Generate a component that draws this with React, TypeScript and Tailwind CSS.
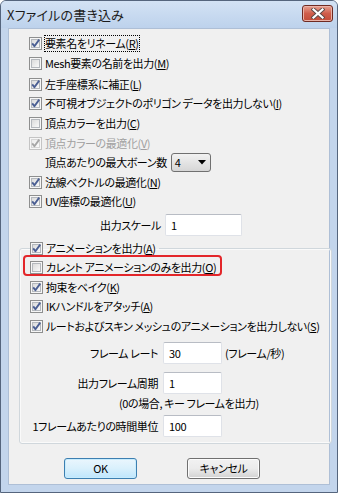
import type { ReactNode } from 'react'

function Box({ checked = false, disabled = false }: { checked?: boolean; disabled?: boolean }) {
  const edge = disabled ? '#c4c4c4' : '#8e8f8f'
  const inner = disabled ? '#d6d6d6' : '#b4b8bd'
  const tick = disabled ? '#a6a6a6' : '#4b5f93'
  return (
    <svg width="13" height="13" viewBox="0 0 13 13" className="shrink-0">
      <defs>
        <linearGradient id={disabled ? 'cbd' : 'cb'} x1="0" y1="0" x2="1" y2="1">
          <stop offset="0" stopColor={disabled ? '#ececec' : '#d9d9d9'} />
          <stop offset="1" stopColor="#fbfbfb" />
        </linearGradient>
      </defs>
      <rect x="0.5" y="0.5" width="12" height="12" fill="#f6f6f6" stroke={edge} />
      <rect x="2.5" y="2.5" width="8" height="8" fill={`url(#${disabled ? 'cbd' : 'cb'})`} stroke={inner} />
      {checked && (
        <path d="M3.2 6.4 L5.4 9.2 L10.2 2.6" fill="none" stroke={tick} strokeWidth="1.9" strokeLinejoin="round" />
      )}
    </svg>
  )
}

function Check({ label, k, checked = false, disabled = false, focus = false, h = 20 }: {
  label: ReactNode; k: string; checked?: boolean; disabled?: boolean; focus?: boolean; h?: number
}) {
  return (
    <div className="flex items-center gap-[2px]" style={{ height: h }}>
      <Box checked={checked} disabled={disabled} />
      <span className={`border leading-[15px] whitespace-nowrap ${focus ? 'border-dotted border-black' : 'border-transparent'} ${disabled ? 'text-[#a0a0a0]' : 'text-black'}`}>
        {label}(<u className="underline-offset-[1px]">{k}</u>)
      </span>
    </div>
  )
}

function Field({ value, w }: { value: string; w: number }) {
  return (
    <div className="h-[22px] bg-white border border-[#dfe2e8] border-t-[#b8bcc4] rounded-[2px] flex items-center pl-[5px] text-black" style={{ width: w }}>
      {value}
    </div>
  )
}

function Button({ children, primary = false }: { children: ReactNode; primary?: boolean }) {
  return (
    <div className={`w-[73px] h-[21px] rounded-[3px] border flex items-center justify-center text-black ${primary ? 'border-[#3c7fb1] bg-linear-to-b from-[#eaf6fd] via-[#d9f0fc] to-[#bee6fd] shadow-[inset_0_0_0_1px_#c8ecfd]' : 'border-[#707070] bg-linear-to-b from-[#f2f2f2] via-[#ebebeb] to-[#d2d2d2] shadow-[inset_0_0_0_1px_#fcfcfc]'}`}>
      {children}
    </div>
  )
}

export default function App() {
  return (
    <div className="w-[338px] h-[493px] bg-[#c3d5ec] border border-[#55657d] rounded-t-[6px] flex flex-col font-['Noto_Sans_CJK_JP',sans-serif] text-[11px] tracking-[-0.4px] [font-feature-settings:'palt'] overflow-hidden">
      {/* title bar */}
      <div className="h-[27px] shrink-0 flex items-start pl-[6px] pr-[4px] bg-linear-to-b from-[#d3e2f4] to-[#bdd2ec]">
        <span className="mt-[5px] text-[13px] leading-[17px] tracking-[0.2px] text-[#1b1b1b]">Xファイルの書き込み</span>
        <div className="ml-auto mt-[4px] w-[31px] h-[17px] rounded-[3px] border border-[#6f2a22] bg-linear-to-b from-[#e6a091] via-[#cf5d4b] to-[#c34c38] flex items-center justify-center shadow-[inset_0_0_0_1px_#eab3a8]">
          <svg width="14" height="11" viewBox="0 0 14 11">
            <path d="M2.5 1.5 L11.5 9.5 M11.5 1.5 L2.5 9.5" stroke="#5a4a48" strokeWidth="4" strokeLinecap="square" />
            <path d="M2.5 1.5 L11.5 9.5 M11.5 1.5 L2.5 9.5" stroke="#ffffff" strokeWidth="2.2" strokeLinecap="square" />
          </svg>
        </div>
      </div>

      {/* client area */}
      <div className="flex-1 mx-[7px] mb-[7px] bg-[#f0f0f0] border border-[#aebfd6] flex flex-col pt-[4px]">
        <div className="pl-[20px] flex flex-col">
          <Check label="要素名をリネーム" k="R" checked focus h={20} />
          <Check label="Mesh要素の名前を出力" k="M" h={21} />
          <Check label="左手座標系に補正" k="L" checked h={20} />
          <Check label="不可視オブジェクトのポリゴン データを出力しない" k="I" checked h={19} />
          <Check label="頂点カラーを出力" k="C" h={20} />
          <Check label="頂点カラーの最適化" k="V" checked disabled h={20} />
          <div className="h-[19px] flex items-center pl-[16px] gap-[4px]">
            <span className="text-black">頂点あたりの最大ボーン数</span>
            <div className="w-[40px] h-[19px] rounded-[3px] border border-[#707070] bg-linear-to-b from-[#f2f2f2] to-[#d6d6d6] flex items-center pl-[3px] pr-[4px] text-black">
              4
              <svg className="ml-auto" width="8" height="5" viewBox="0 0 8 5"><path d="M0 0 H8 L4 4.5 Z" fill="#000" /></svg>
            </div>
          </div>
          <Check label="法線ベクトルの最適化" k="N" checked h={20} />
          <Check label="UV座標の最適化" k="U" checked h={19} />
        </div>

        <div className="mt-[3px] flex items-center">
          <span className="w-[152px] text-right text-black">出力スケール</span>
          <div className="ml-[4px]"><Field value="1" w={77} /></div>
        </div>

        <fieldset className="mt-[2px] ml-[10px] w-[302px] border border-[#d0d7dc] rounded-[3px] px-[10px] pb-[6px] m-0 shadow-[inset_0_0_0_1px_#fafafa]">
          <legend className="pr-[2px] h-[20px]">
            <Check label="アニメーションを出力" k="A" checked h={20} />
          </legend>
          <div className="relative">
            <span className="absolute left-[-7px] top-[-3px] w-[199px] h-[21px] rounded-[4px] border-[2.5px] border-[#e3262a]" />
            <Check label="カレント アニメーションのみを出力" k="O" h={19} />
          </div>
          <Check label="拘束をベイク" k="K" checked h={20} />
          <Check label="IKハンドルをアタッチ" k="A" checked h={19} />
          <Check label="ルートおよびスキン メッシュのアニメーションを出力しない" k="S" checked h={20} />

          <div className="mt-[6px] flex items-center">
            <span className="w-[128px] text-right text-black">フレーム レート</span>
            <div className="ml-[5px]"><Field value="30" w={59} /></div>
            <span className="ml-[3px] text-black">(フレーム/秒)</span>
          </div>
          <div className="mt-[8px] flex items-center">
            <span className="w-[128px] text-right text-black">出力フレーム周期</span>
            <div className="ml-[5px]"><Field value="1" w={59} /></div>
          </div>
          <div className="h-[19px] flex items-center pl-[89px] text-black">(0の場合, キー フレームを出力)</div>
          <div className="mt-[2px] flex items-center">
            <span className="w-[128px] text-right text-black whitespace-nowrap">1フレームあたりの時間単位</span>
            <div className="ml-[5px]"><Field value="100" w={59} /></div>
          </div>
        </fieldset>

        <div className="mt-[14px] flex pl-[55px] gap-[50px]">
          <Button primary>OK</Button>
          <Button>キャンセル</Button>
        </div>
      </div>
    </div>
  )
}
